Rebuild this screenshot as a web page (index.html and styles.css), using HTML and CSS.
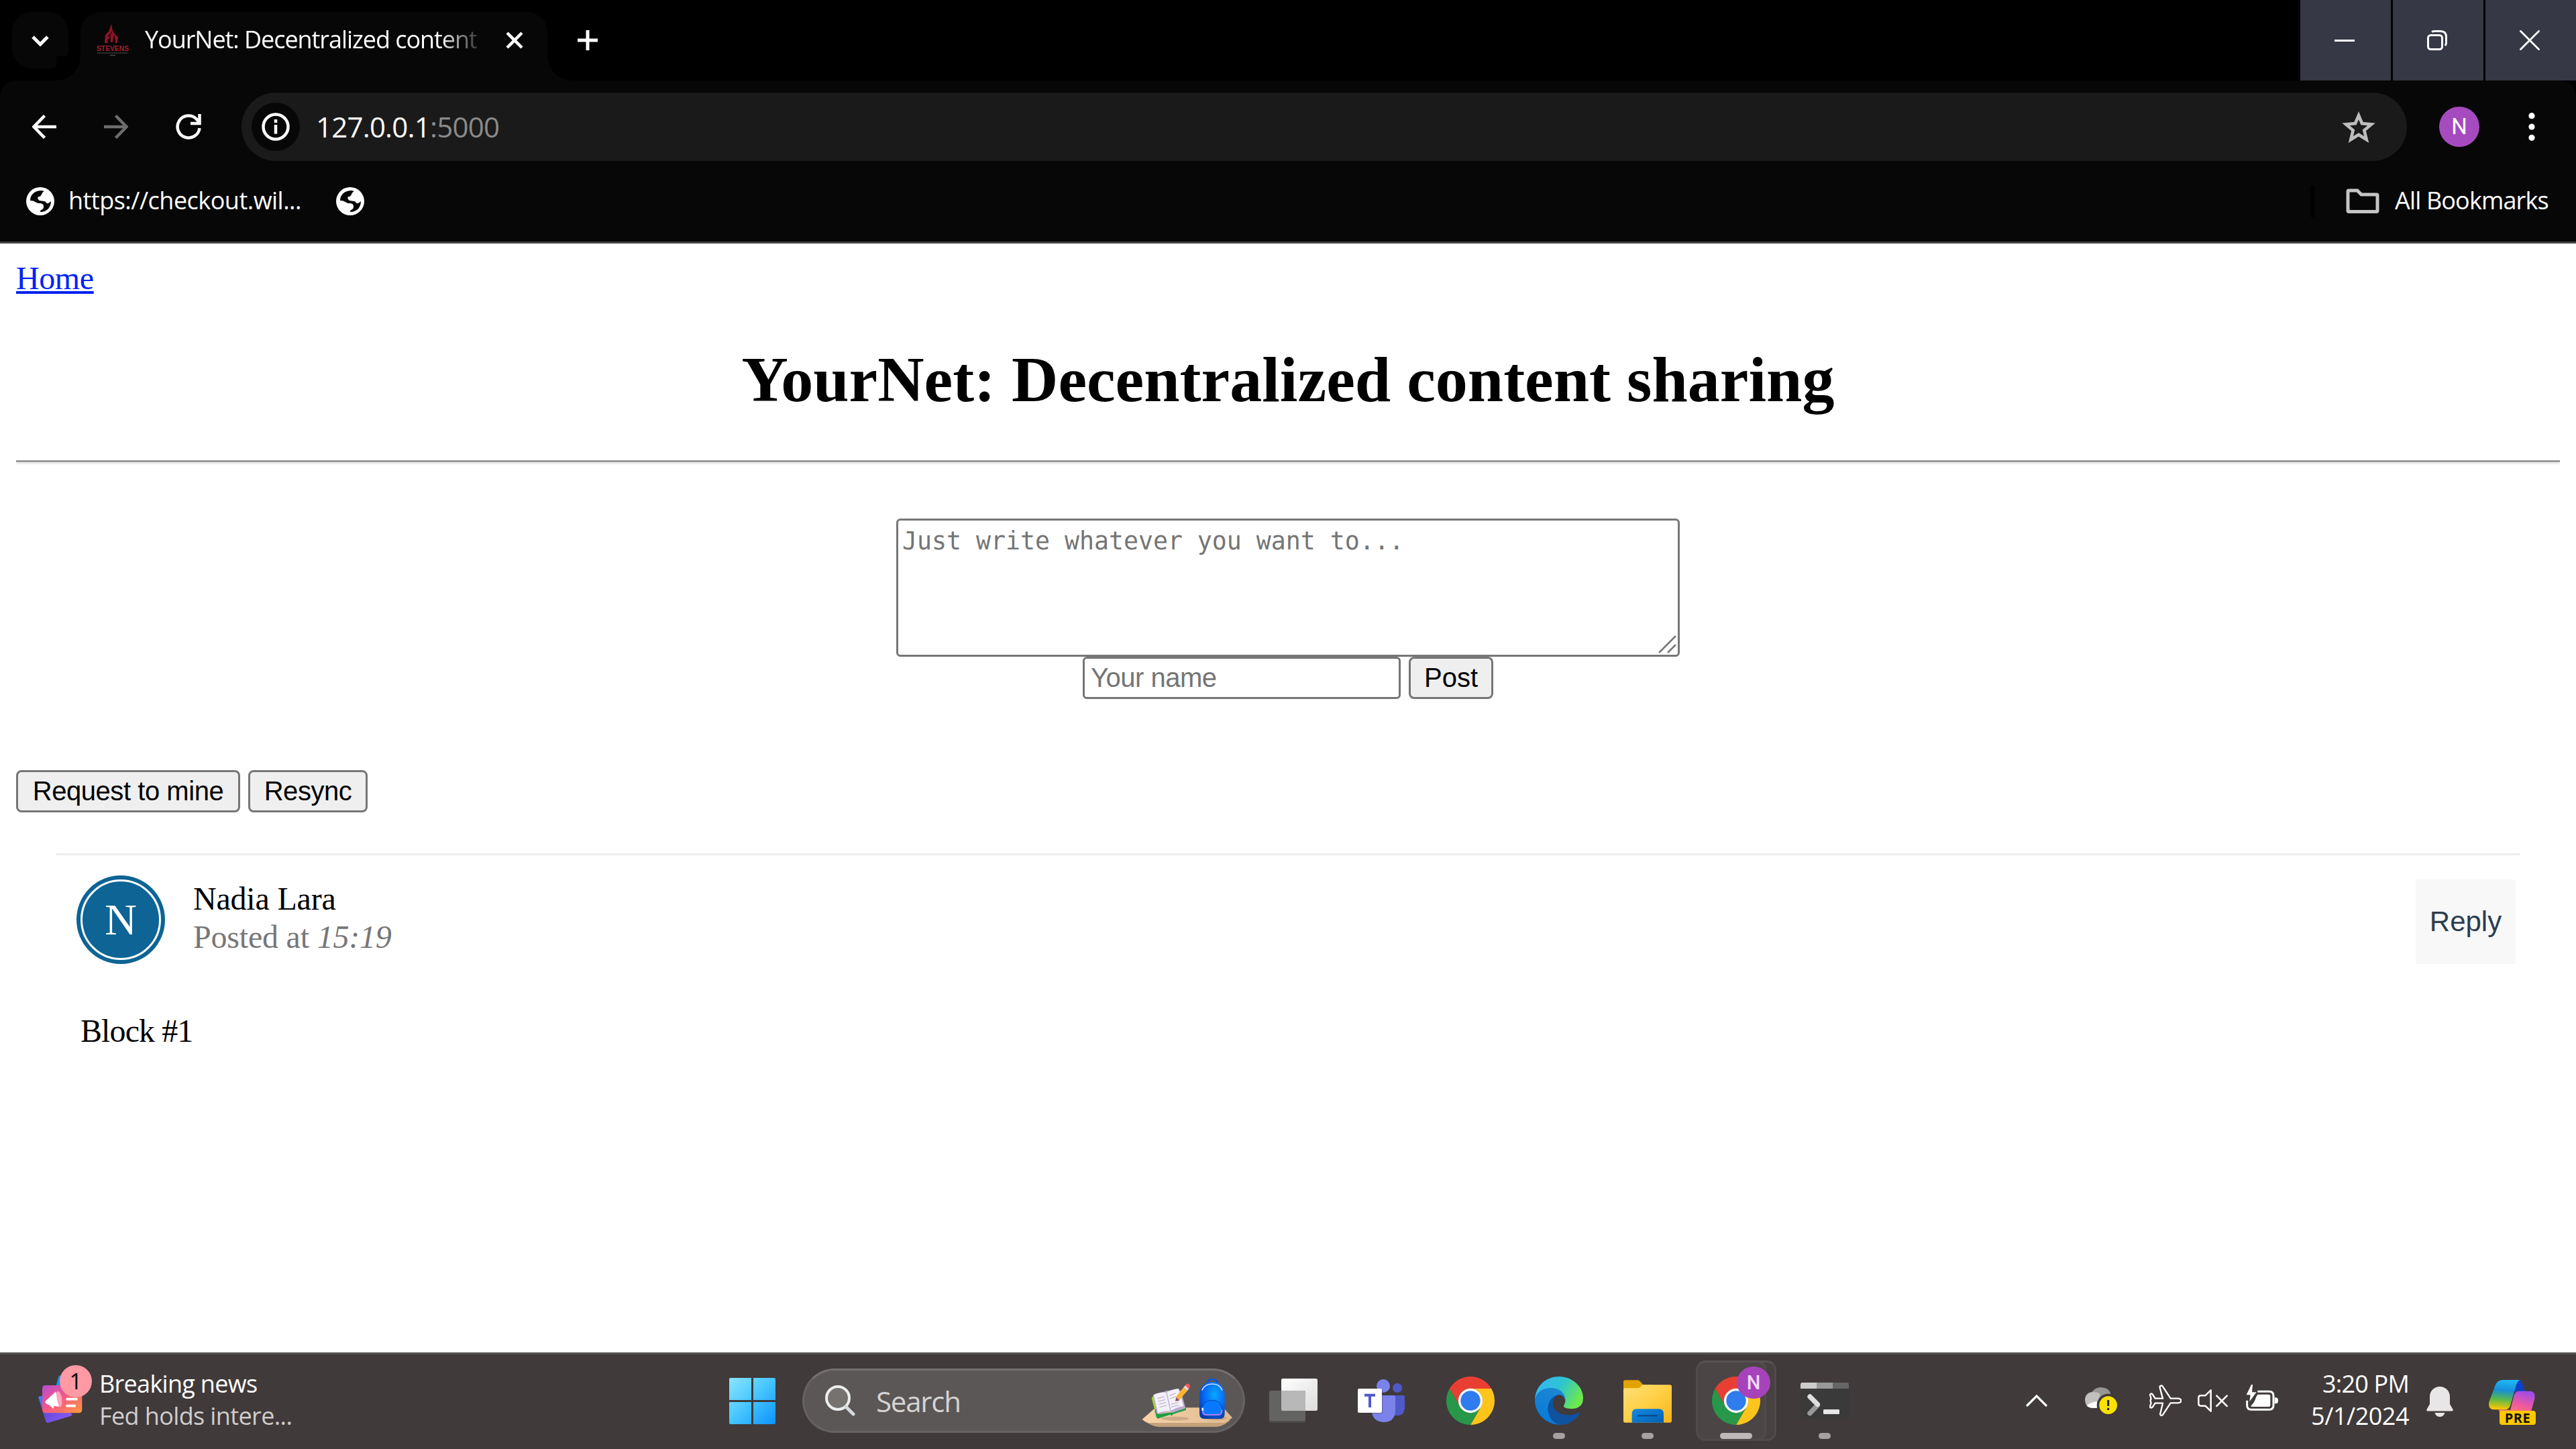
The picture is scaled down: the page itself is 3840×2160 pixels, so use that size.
FILE: index.html
```html
<!DOCTYPE html>
<html lang="en">
<head>
<meta charset="utf-8">
<title>YourNet: Decentralized content sharing</title>
<link rel="stylesheet" href="styles.css">
</head>
<body>
<div class="browser">
  <div class="tabstrip">
    <div class="tab-search"><svg width="30" height="30" viewBox="0 0 30 30"><path d="M4 10l11 11 11-11" fill="none" stroke="#fff" stroke-width="5"/></svg></div>
    <div class="tab">
      <svg class="favicon" width="48" height="48" viewBox="0 0 48 48">
        <path d="M22 0l2 10 4 6 4 3-1 8-3 2v-7l-3-2-1 7h-3l-1-6-4 2 1 5h-5l1-12 5-5z" fill="#8e1526"/>
        <path d="M17 18l3-3v9M26 17l1 8M22 11v3" stroke="#1a0508" stroke-width="1.5" fill="none"/>
        <text x="0" y="40" textLength="48" lengthAdjust="spacingAndGlyphs" class="fav-name">STEVENS</text>
        <path d="M1 43h46" stroke="#4b4b4b" stroke-width="1.6" stroke-dasharray="2 1"/><path d="M20 46.5h8" stroke="#4b4b4b" stroke-width="1.5"/>
      </svg>
      <span class="tab-title">YourNet: Decentralized content</span>
      <svg class="tab-close" width="26" height="26" viewBox="0 0 26 26"><path d="M2 2l22 22M24 2L2 24" stroke="#fff" stroke-width="4.5"/></svg>
    </div>
    <svg class="new-tab" width="30" height="30" viewBox="0 0 30 30"><path d="M15 0v30M0 15h30" stroke="#fff" stroke-width="5"/></svg>
    <div class="window-buttons">
      <span class="wb"><svg width="30" height="30" viewBox="0 0 30 30"><path d="M0 15.5h30" stroke="#fff" stroke-width="3"/></svg></span>
      <span class="wb"><svg width="30" height="30" viewBox="0 0 30 30"><rect x="1.5" y="7.5" width="21" height="21" rx="4" fill="none" stroke="#fff" stroke-width="3"/><path d="M7 2.5Q9 1.500 11 1.500h9Q28.500 1.500 28.500 10v9q0 2-1.500 4" fill="none" stroke="#fff" stroke-width="3"/></svg></span>
      <span class="wb"><svg width="30" height="30" viewBox="0 0 30 30"><path d="M0.500 .5l29 29M29.500 .5l-29 29" stroke="#fff" stroke-width="2.800"/></svg></span>
    </div>
  </div>
  <div class="toolbar">
    <div class="nav-icons">
      <svg width="36" height="36" viewBox="0 0 36 36"><path d="M36 18H3M18.500 1.500L2.500 18l16 16.500" fill="none" stroke="#fff" stroke-width="4.500"/></svg>
      <svg width="36" height="36" viewBox="0 0 36 36"><path d="M0 18h33M17.500 1.500l16 16.500-16 16.500" fill="none" stroke="#6c6c6c" stroke-width="4.500"/></svg>
      <svg width="38" height="38" viewBox="0 0 38 38"><path d="M35.500 21A16.500 16.500 0 1 1 31 7.500l3.500 4.500" fill="none" stroke="#fff" stroke-width="4.500"/><path d="M35.500 0v14H22" fill="none" stroke="#fff" stroke-width="4.500"/></svg>
    </div>
    <div class="omnibox">
      <span class="site-info"><svg width="42" height="42" viewBox="0 0 42 42"><circle cx="21" cy="21" r="18.500" fill="none" stroke="#fff" stroke-width="4.500"/><path d="M21 18v13.500M21 10v5" stroke="#fff" stroke-width="4.500"/></svg></span>
      <span class="url">127.0.0.1<span class="port">:5000</span></span>
      <svg class="star" width="50" height="48" viewBox="0 0 150 142"><path d="M75 20l15 36 42 4-32 27 10 41-35-22-35 22 10-41L18 60l42-4z" fill="none" stroke="#bdbdbd" stroke-width="14"/></svg>
    </div>
    <span class="profile">N</span>
    <svg class="kebab" width="10" height="42" viewBox="0 0 10 42"><g fill="#fff"><circle cx="5" cy="4.700" r="4.600"/><circle cx="5" cy="21" r="4.600"/><circle cx="5" cy="37.300" r="4.600"/></g></svg>
  </div>
  <div class="bookmarks">
    <svg width="42" height="42" viewBox="0 0 42 42"><g id="globe"><circle cx="21" cy="21" r="21" fill="#fff"/><path d="M23 5l4 1c-5 3-3 6-7 8-5 0-2 5 0 6l7 1c3 0 2 4 6 3l4-3c0 9-6 16-16 16 0-5 5-2 5-8 0-5-4-5-8-5-4-1-5-4-12-4C6 11 13 5 23 5z" fill="#070707"/><path d="M27 8l4 2 2 6c-3 4-7 0-7-3z" fill="#fff"/></g></svg>
    <span class="bm">https://checkout.wil...</span>
    <svg class="bm2" width="42" height="42" viewBox="0 0 42 42"><use href="#globe"/></svg>
    <span class="bm-sep"></span>
    <svg class="folder" width="50" height="38" viewBox="0 0 50 38"><path d="M3 4.500Q3 3 4.500 3H17l6 6h22.500Q47 9 47 10.500V33q0 1.500-1.500 1.500h-41Q3 34.500 3 33z" fill="none" stroke="#c4c4c4" stroke-width="5"/></svg>
    <span class="bm all">All Bookmarks</span>
  </div>
</div>

<main class="page">
  <a class="home" href="#">Home</a>
  <h1>YourNet: Decentralized content sharing</h1>
  <hr>
  <form class="post-form">
    <div class="area-wrap">
      <textarea placeholder="Just write whatever you want to..."></textarea>
      <svg class="grip" width="30" height="30" viewBox="0 0 30 30"><path d="M2 27L27 2M15 27l12-12" stroke="#777" stroke-width="2.500"/></svg>
    </div>
    <div class="row">
      <input type="text" placeholder="Your name">
      <button class="btn post" type="button">Post</button>
    </div>
  </form>
  <div class="actions">
    <button class="btn mine" type="button">Request to mine</button>
    <button class="btn resync" type="button">Resync</button>
  </div>
  <section class="post-box">
    <div class="post-head">
      <span class="avatar">N</span>
      <div class="who"><div>Nadia Lara</div><div class="when">Posted at <i>15:19</i></div></div>
      <button class="reply" type="button">Reply</button>
    </div>
    <p class="post-body">Block #1</p>
  </section>
</main>

<footer class="taskbar">
  <div class="widget">
    <span class="news-icon">
      <svg width="82" height="88" viewBox="168 69 246 264">
        <defs><linearGradient id="nw" x1="0" y1="0" x2="1" y2="1"><stop offset="0" stop-color="#b44fd0"/><stop offset=".45" stop-color="#f4558a"/><stop offset="1" stop-color="#ff9a3c"/></linearGradient>
        <linearGradient id="nb" x1="0" y1="0" x2="1" y2="1"><stop offset="0" stop-color="#2f8bf5"/><stop offset=".5" stop-color="#6a4be0"/><stop offset="1" stop-color="#9360f5"/></linearGradient></defs>
        <path d="M262 122q2-6 8-4l100 30-8 70-120-20z" fill="#1197ea"/>
        <path d="M171 214l20-6 132 84q-2 6-8 8l-98 29q-8 3-12-5z" fill="url(#nb)"/>
        <rect x="189" y="162" width="178" height="124" rx="14" fill="url(#nw)"/>
        <ellipse cx="264" cy="224" rx="13" ry="35" fill="#ffa4bd" transform="rotate(-8 264 224)"/>
        <path d="M203 233l47-43q2 35 14 68l-22-4-4 13-14-14-18-9q-5-5-3-11z" fill="#fff"/>
        <path d="M300 224h42M300 254h34" stroke="#fff" stroke-width="11" stroke-linecap="round"/>
      </svg>
      <b class="badge">1</b>
    </span>
    <span class="news"><span class="headline">Breaking news</span><br><span class="dim">Fed holds intere...</span></span>
  </div>
  <div class="apps">
    <svg width="69" height="69" viewBox="0 0 69 69"><defs><linearGradient id="wl" gradientUnits="userSpaceOnUse" x1="0" y1="0" x2="69" y2="69"><stop offset="0" stop-color="#8be4ff"/><stop offset=".45" stop-color="#4cc8ff"/><stop offset="1" stop-color="#0a93ff"/></linearGradient></defs><path d="M2 0h31v33H0V2q0-2 2-2zM36 0h31q2 0 2 2v31H36zM0 36h33v33H2q-2 0-2-2zM36 36h33v31q0 2-2 2H36z" fill="url(#wl)"/></svg>
    <div class="search">
      <svg width="45" height="46" viewBox="0 0 45 46"><circle cx="19" cy="19" r="17" fill="#757270" stroke="#eceeef" stroke-width="4"/><path d="M31 32l11 11" stroke="#d5dadd" stroke-width="5" stroke-linecap="round"/></svg>
      <span class="search-label">Search</span>
      <svg class="school" width="136" height="74" viewBox="36 72 408 222">
        <defs><linearGradient id="wd"><stop offset="0" stop-color="#f8d3a8"/><stop offset="1" stop-color="#dfb98f"/></linearGradient><radialGradient id="bp" cx=".6" cy=".35" r=".7"><stop offset="0" stop-color="#08a8ff"/><stop offset=".6" stop-color="#0768f8"/><stop offset="1" stop-color="#063fa8"/></radialGradient></defs>
        <path d="M38 257Q70 285 110 291H370Q410 288 441 250L430 262z" fill="#c3a27c"/>
        <path d="M38 257L98 205H400L441 250Q425 266 405 273H65Q50 268 38 257z" fill="url(#wd)"/>
        <ellipse cx="185" cy="254" rx="62" ry="9" fill="#b8977a" opacity=".6"/><ellipse cx="365" cy="252" rx="50" ry="8" fill="#a98666" opacity=".5"/>
        <path d="M80 162l10-12 20 84 60-8 64-24v14l-58 18-6 8-6-6-56 18q-5 0-7-8z" fill="#1f9d45"/><path d="M80 162l8-10 12 50-4 20z" fill="#a6d62a"/>
        <path d="M86 150l18 84 60-12 8 6 60-20-22-80-58 0z" fill="#b9aad0"/>
        <path d="M89 148q30-15 58-10l18 82q-25-2-57 9zM147 138q20-15 54-18l22 79q-30 3-58 21z" fill="#f4f0fb"/>
        <path d="M147 138l18 82" stroke="#c4b8da" stroke-width="5"/>
        <path d="M106 164l32-8M110 177l32-8M113 190l32-8M116 203l32-8M160 152l28-12M166 190l34-8M168 202l34-8M163 165l25-10" stroke="#aaa6b5" stroke-width="3"/>
        <path d="M186 176l4-18 13 10 0 6z" fill="#8d5060"/><path d="M189 157l34-43 18 14-37 43z" fill="#f9b431"/><path d="M223 114l8-9 17 14-8 10z" fill="#e6d6e2"/><path d="M230 105l6-7q5-2 14 5 5 7 1 11l-6 6z" fill="#f75a4e"/>
        <path d="M330 96q0-18 21-18t23 18" fill="none" stroke="#0a55d8" stroke-width="7"/>
        <path d="M294 150q2-58 57-60 54 2 56 60v82q0 23-22 23h-70q-21 0-21-23z" fill="url(#bp)"/>
        <path d="M305 128q12-29 46-29t45 29" fill="none" stroke="#d7e2ff" stroke-width="5"/>
        <path d="M306 212q4-41 45-41t44 41v14q0 13-13 13h-62q-14 0-14-13z" fill="#0879ff"/>
        <path d="M307 212q4-40 44-40t44 38" fill="none" stroke="#0449b8" stroke-width="3"/><path d="M308 215q0 22 16 22h54q16 0 16-22" fill="none" stroke="#b37cf4" stroke-width="6"/><path d="M308 206v12" stroke="#fff" stroke-width="8"/>
      </svg>
    </div>
    <div class="slots">
      <span class="slot"><svg width="72" height="72" viewBox="0 0 216 216"><defs><linearGradient id="tv" x1="0" y1="0" x2="1" y2="1"><stop offset="0" stop-color="#fff"/><stop offset="1" stop-color="#dcdcdc"/></linearGradient></defs><rect x="54" y="9" width="162" height="144" rx="7" fill="url(#tv)"/><path d="M0 190h162v10q0 7-7 7H7q-7 0-7-7z" fill="#4b4949"/><rect y="63" width="162" height="136" rx="7" fill="#636362"/><path d="M54 63h101q7 0 7 7v83H61q-7 0-7-7z" fill="#b8b8b8"/></svg></span>
      <span class="slot"><svg width="72" height="72" viewBox="0 0 216 216"><circle cx="177" cy="51" r="21" fill="#5059c9"/><path d="M160 84h42q8 0 8 8v45q0 37-34 37h-16z" fill="#5059c9"/><circle cx="114" cy="42" r="30" fill="#7b83eb"/><path d="M63 84h97q8 0 8 8v60q-2 52-53 52-46-2-52-44z" fill="#7b83eb"/><rect x="2" y="57" width="110" height="109" rx="7" fill="#33333a" opacity=".35"/><rect y="54" width="108" height="108" rx="6" fill="#fff"/><path d="M30 83h48M54 83v55" stroke="#5059c9" stroke-width="12"/></svg></span>
      <span class="slot"><svg width="72" height="72" viewBox="0 0 48 48"><g id="chrome"><path d="M3.220 12A24 24 0 0 1 44.780 12H24A12 12 0 0 0 13.600 30z" fill="#e93f33"/><path d="M44.780 12A24 24 0 0 1 24 48L34.400 30A12 12 0 0 0 24 12z" fill="#fdc41c"/><path d="M24 48A24 24 0 0 1 3.220 12L13.600 30A12 12 0 0 0 34.400 30z" fill="#27984a"/><circle cx="24" cy="24" r="12.100" fill="#fff"/><circle cx="24" cy="24" r="9.800" fill="#2f7cee"/></g></svg></span>
      <span class="slot"><svg width="72" height="72" viewBox="0 0 216 216"><defs><linearGradient id="eg" x1="0" y1=".2" x2="1" y2=".6"><stop offset="0" stop-color="#35b5f8"/><stop offset=".5" stop-color="#2fc5d0"/><stop offset=".95" stop-color="#6be84e"/></linearGradient><linearGradient id="eb" x1=".5" y1="0" x2=".3" y2="1"><stop offset="0" stop-color="#1c86d2"/><stop offset="1" stop-color="#0579dc"/></linearGradient></defs><path d="M0 105C2 40 52 0 108 0c60 0 108 45 108 96 0 34-22 49-52 48-28-1-40-8-34-16 14-20 4-47-30-55C60 40 10 60 0 105z" fill="url(#eg)"/><path d="M0 105C5 70 35 51 72 51c40 0 66 27 65 56C132 90 120 81 106 82c-26 4-30 40-30 60 4 40 24 66 48 73C50 220 0 165 0 105z" fill="url(#eb)"/><path d="M106 82c-28 4-48 30-48 62 1 40 30 72 62 72 36-2 70-25 81-53 2-5-2-5-6-2-50 26-116 4-114-44 1-15 12-30 25-35z" fill="#0f52a0"/></svg><i class="dot"></i></span>
      <span class="slot"><svg width="72" height="72" viewBox="0 0 216 216"><defs><linearGradient id="fo" x1="0" y1="0" x2="1" y2="1"><stop offset="0" stop-color="#ffe07a"/><stop offset=".5" stop-color="#ffcf45"/><stop offset="1" stop-color="#f5b41a"/></linearGradient><linearGradient id="fb" x1="0" y1="0" x2="1" y2="1"><stop offset="0" stop-color="#128ae0"/><stop offset="1" stop-color="#0560b4"/></linearGradient></defs><path d="M0 60V24q0-8 8-8h56q6 0 10 5l14 16h40v30z" fill="#e2a300"/><path d="M0 60q0-8 8-8h56q6 0 10-5l8-7q3-3 8-3h118q8 0 8 8v153q0 8-8 8H8q-8 0-8-8z" fill="url(#fo)"/><path d="M38 206v-40q0-21 21-21h100q21 0 21 21v40z" fill="url(#fb)"/><path d="M66 175h84" stroke="#064a8c" stroke-width="7" stroke-linecap="round"/></svg><i class="dot"></i></span>
      <span class="slot active"><i class="stack"></i><i class="plate"></i><svg width="72" height="72" viewBox="0 0 48 48"><use href="#chrome"/></svg><b class="pbadge">N</b><i class="bar"></i></span>
      <span class="slot"><svg width="72" height="72" viewBox="0 0 216 216"><rect y="27" width="216" height="162" rx="8" fill="#3a3a3a"/><path d="M0 54V35q0-8 8-8h64v27z" fill="#ccc"/><path d="M72 27h72v27H72z" fill="#999"/><path d="M144 27h64q8 0 8 8v19h-72z" fill="#666"/><path d="M76 128l-34 36" stroke="#999" stroke-width="22" stroke-linecap="round"/><path d="M42 90l34 34" stroke="#dedede" stroke-width="22" stroke-linecap="round"/><rect x="102" y="147" width="72" height="21" rx="4" fill="#e6e6e6"/></svg><i class="dot"></i></span>
    </div>
  </div>
  <div class="tray">
    <svg class="chev" width="32" height="18" viewBox="0 0 32 18"><path d="M2 16L16 2l14 14" fill="none" stroke="#fff" stroke-width="3.200" stroke-linecap="round"/></svg>
    <svg class="cloud" width="48" height="42" viewBox="54 93 144 126"><path d="M84 118q16-22 42-22 38 2 44 32l-50 40z" fill="#979594"/><path d="M54 152q2-34 38-35 20 0 30 10l-16 62H88q-32-2-34-37z" fill="#c2c0bf"/><path d="M62 178q14-14 46-18v28H86q-16 0-24-10z" fill="#fff"/><circle cx="158" cy="176" r="51" fill="#403a3a"/><circle cx="158" cy="176" r="40" fill="#fbe200"/><path d="M158 153v27M158 188v10" stroke="#222" stroke-width="9"/></svg>
    <svg class="plane" width="48" height="48" viewBox="342 72 144 144"><path d="M389 80q8-8 14 2l34 52h32q15 1 15 10t-15 10h-32l-34 52q-8 9-13-1l12-50h-34l-12 18q-10 6-11-3l5-17q-6-9 0-18l-5-17q2-9 11-3l12 19h34L389 86z" fill="none" stroke="#fff" stroke-width="7" stroke-linejoin="round"/></svg>
    <svg class="speaker" width="45" height="36" viewBox="558 92 135 104"><path d="M617 97v94l-25-24h-20q-10 0-10-10v-26q0-10 10-10h20zM643 122l46 46M689 122l-46 46" fill="none" stroke="#fff" stroke-width="7.500" stroke-linejoin="round" stroke-linecap="round"/></svg>
    <svg class="battery" width="48" height="40" viewBox="774 72 144 120"><path d="M826 103h52q19 0 19 19v43q0 19-19 19h-80q-19 0-19-19v-22" fill="none" stroke="#fff" stroke-width="9"/><path d="M902 130h8q8 2 8 14t-8 13h-8z" fill="#fff"/><path d="M826 116h50q7 0 7 7v41q0 7-7 7h-79l0-6q14-10 22-36z" fill="#fff"/><path d="M798 72l-22 46h18l-4 30 31-42h-20l3-34z" fill="#fff"/></svg>
    <div class="clock"><span class="time">3:20 PM</span><br>5/1/2024</div>
    <svg class="bell" width="40" height="45" viewBox="0 0 40 45"><path d="M20 0C11 0 5 7 5 15v11L.5 34q-1 2.500 1.500 2.500h36q2.500 0 1.500-2.500L35 26V15C35 7 29 0 20 0zM12.500 39h15q-2 6-7.500 6t-7.500-6z" fill="#e8e6e6"/></svg>
    <span class="copilot"><svg width="70" height="67" viewBox="0 0 210 201"><defs><linearGradient id="c1" x1=".5" y1="0" x2=".4" y2="1"><stop offset="0" stop-color="#20b8f5"/><stop offset=".35" stop-color="#178fd6"/><stop offset=".65" stop-color="#58b84c"/><stop offset="1" stop-color="#ffc800"/></linearGradient><linearGradient id="c2" x1=".7" y1="0" x2=".3" y2="1"><stop offset="0" stop-color="#a04be8"/><stop offset=".5" stop-color="#ee5aa0"/><stop offset="1" stop-color="#ff8a50"/></linearGradient></defs><path d="M100 0h32q14 0 19 17l11 33h-35q-14 2-17 15z" fill="#0b41c8"/><path d="M62 0h78q-12 4-18 25l-26 90q-6 18-24 18H22q-26-2-21-34L28 26Q36 2 62 0z" fill="url(#c1)"/><path d="M134 50h52q24 2 19 34l-22 80H68q-18-4-24-31h28q18 0 24 3l15-60q6-26 23-26z" fill="url(#c2)"/></svg><b class="pre">PRE</b></span>
  </div>
</footer>
</body>
</html>
```
FILE: styles.css
```css
* { box-sizing: border-box; }
svg { display: block; flex: none; }
body {
  margin: 0;
  width: 3840px;
  height: 2160px;
  overflow: hidden;
  display: flex;
  flex-direction: column;
  background: #fff;
  color: #000;
  font-family: "Liberation Serif", "Times New Roman", serif;
  font-size: 48px;
}

/* browser chrome */
.browser {
  flex: none;
  height: 363px;
  background: #000;
  border-bottom: 3px solid #454243;
  color: #fff;
  font: 36px "Open Sans", "Noto Sans", sans-serif;
  white-space: nowrap;
}
.tabstrip { display: flex; align-items: center; height: 120px; padding-left: 18px; }
.tab-search {
  width: 84px; height: 84px; border-radius: 30px; background: #070707;
  display: flex; align-items: center; justify-content: center;
}
.tab {
  position: relative;
  display: flex; align-items: center; align-self: flex-end;
  width: 696px; height: 102px; margin-left: 18px; padding: 0 36px 18px 24px;
  border-radius: 30px 30px 0 0; background: #070707;
}
.tab::before, .tab::after { content: ""; position: absolute; bottom: 0; width: 36px; height: 36px; }
.tab::before { left: -36px; background: radial-gradient(circle at 0 0, #000 35.500px, #070707 36px); }
.tab::after { right: -36px; background: radial-gradient(circle at 100% 0, #000 35.500px, #070707 36px); }
.fav-name { font: bold 10px "Liberation Sans", sans-serif; fill: #a31f34; }
.tab-title {
  width: 501px; margin-left: 24px; padding-bottom: 3px; letter-spacing: -1.060px;
  -webkit-mask-image: linear-gradient(90deg, #000 440px, transparent 508px);
  mask-image: linear-gradient(90deg, #000 440px, transparent 508px);
}
.tab-close { margin-left: 39px; }
.new-tab { margin-left: 45px; }
.window-buttons { display: flex; gap: 3px; margin-left: auto; }
.wb { width: 135px; height: 120px; padding-right: 3px; background: #373846; display: flex; align-items: center; justify-content: center; }
.toolbar {
  display: flex; align-items: center; height: 120px; padding: 18px 56px 0 48px;
  background: #070707; border-radius: 24px 24px 0 0;
}
.nav-icons { display: flex; align-items: center; gap: 71px; width: 312px; }
.omnibox { display: flex; align-items: center; width: 3228px; height: 102px; border-radius: 51px; background: #1a1a1a; padding: 0 47px 0 15px; }
.site-info { width: 72px; height: 72px; border-radius: 50%; background: #070707; display: flex; align-items: center; justify-content: center; }
.url { margin-left: 24px; padding-bottom: 2px; font-size: 42px; letter-spacing: -.8px; }
.port { color: #8a8a8a; }
.star { margin-left: auto; }
.profile {
  width: 60px; height: 60px; margin-left: 48px; border-radius: 50%; background: #a64bbf;
  font: 400 33px/60px Roboto, sans-serif; text-align: center;
}
.kebab { margin-left: 73px; }
.bookmarks { display: flex; align-items: center; height: 120px; padding: 0 43px 0 39px; background: #070707; }
.bm { padding-bottom: 3px; margin-left: 21px; width: 346px; letter-spacing: -.52px; }
.bm2 { margin-left: 53px; }
.bm-sep { width: 6px; height: 48px; margin-left: auto; border-radius: 3px; background: #000; }
.folder { margin-left: 47px; }
.bm.all { width: 227px; margin-left: 23px; letter-spacing: -.85px; }

/* page */
.page { flex: 1; padding: 24px; background: #fff; }
.home { display: block; width: 130px; height: 55px; line-height: 55px; letter-spacing: -.4px; color: #0022f5; text-decoration-thickness: 4px; text-underline-offset: 3px; }
h1 { margin: 66px 0 62px; font-size: 96px; line-height: 116px; height: 116px; text-align: center; }
hr { margin: 0; height: 6px; border: 0; border-top: 3px solid #9a9a9a; background: #eee; }
.post-form { display: flex; flex-direction: column; align-items: center; padding-top: 81px; }
.area-wrap { position: relative; width: 1168px; height: 206px; }
textarea {
  display: block; width: 100%; height: 100%; padding: 6px 6px; resize: none; overflow: hidden;
  border: 3px solid #767676; border-radius: 6px; background: #fff;
  font: 36.540px/50px "DejaVu Sans Mono", "Liberation Mono", monospace;
}
::placeholder { color: #757575; opacity: 1; }
.grip { position: absolute; right: 3px; bottom: 3px; }
.row { display: flex; gap: 12px; }
input {
  width: 474px; height: 63px; padding: 0 9px; border: 3px solid #767676; border-radius: 6px;
  font: 40px "Liberation Sans", Arial, sans-serif; letter-spacing: -.5px; background: #fff;
}
.btn {
  height: 63px; padding: 0; border: 3px solid #767676; border-radius: 8px; background: #efefef; color: #000;
  font: 40px "Liberation Sans", Arial, sans-serif; white-space: nowrap;
}
.post { width: 126px; }
.actions { display: flex; gap: 12px; margin-top: 106px; }
.mine, .resync { letter-spacing: -.45px; }
.mine { width: 334px; }
.resync { width: 178px; }
.post-box { margin: 61px 60px 0; border-top: 3px solid #eee; padding: 30px 6px 0 30px; }
.post-head { display: flex; align-items: center; height: 132px; }
.avatar {
  position: relative; width: 132px; height: 132px; border-radius: 50%; background: #0d6495; color: #fff;
  font-size: 66px; line-height: 132px; text-align: center;
}
.avatar::after { content: ""; position: absolute; inset: 6px; border: 3px solid #fff; border-radius: 50%; }
.who { margin: 0 auto 6px 42px; line-height: 57px; letter-spacing: -.2px; }
.when { color: #777; }
.reply { width: 149px; height: 126px; margin-top: 6px; padding: 0; border: 0; background: #f8f8f8; color: #2c3e50; font: 42px "Liberation Sans", Arial, sans-serif; }
.post-body { margin: 72px 6px 0; line-height: 55px; letter-spacing: -.9px; }

/* taskbar */
.taskbar {
  flex: none; display: grid; grid-template-columns: 1087px 1933px 820px; align-items: center;
  height: 144px; background: linear-gradient(#54534f 3px, #403a3a 3px); color: #fff;
  font: 36px/48px "Open Sans", "Noto Sans", sans-serif;
}
.widget, .apps, .slots, .tray { display: flex; align-items: center; height: 144px; }
.news-icon { position: relative; margin: 0 10px 20px 56px; }
.badge {
  position: absolute; left: 33px; top: 1px; width: 48px; height: 48px; border-radius: 50%; background: #ff99a4;
  color: #000; font: 33px/48px "Open Sans", sans-serif; text-align: center;
}
.news, .clock { padding-bottom: 2px; white-space: nowrap; }
.headline { letter-spacing: -.7px; }
.dim { color: #cfcdcd; letter-spacing: -.62px; }
.search {
  display: flex; align-items: center; width: 660px; height: 96px; margin-left: 40px; padding: 0 15px 0 31px;
  border: 3px solid #656261; border-top-color: #757170; border-radius: 48px; background: #5b5756;
}
.search-label { margin: 1px 0 0 31px; color: #d6d4d4; font-size: 42px; letter-spacing: -1.2px; }
.school { margin: 6px 0 0 auto; }
.slots { margin-left: 6px; }
.slot { position: relative; display: flex; align-items: center; justify-content: center; width: 132px; height: 144px; }
.slot svg { position: relative; }
.dot, .bar { position: absolute; bottom: 15px; height: 9px; border-radius: 5px; }
.dot { width: 18px; background: #a5a2a1; }
.bar { width: 48px; background: #bdb9b8; }
.plate, .stack { position: absolute; top: 12px; height: 120px; border-radius: 14px; border: 3px solid #514b4b; border-top-color: #575252; background: #4b4645; }
.plate { left: 6px; width: 105px; }
.stack { left: 60px; width: 66px; background: #474141; }
.pbadge {
  position: absolute; right: 15px; top: 21px; width: 50px; height: 48px; border-radius: 50%; background: #a743ba;
  color: #f0d8f4; font: 500 29px/48px Roboto, sans-serif; text-align: center;
}
.cloud { margin-left: 56px; }
.plane { margin-left: 48px; }
.speaker { margin-left: 24px; }
.battery { margin: 0 0 8px 27px; }
.clock { width: 195px; text-align: right; letter-spacing: -.5px; }
.time { letter-spacing: -.8px; }
.bell { margin: 2px 0 0 26px; }
.copilot { position: relative; margin: 5px 0 0 53px; }
.pre {
  position: absolute; right: 0; bottom: 0; width: 54px; height: 21px; border-radius: 4px; background: #ffc800;
  color: #111; font: bold 20px/21px "Open Sans", sans-serif; text-align: center; letter-spacing: .5px;
}
```
